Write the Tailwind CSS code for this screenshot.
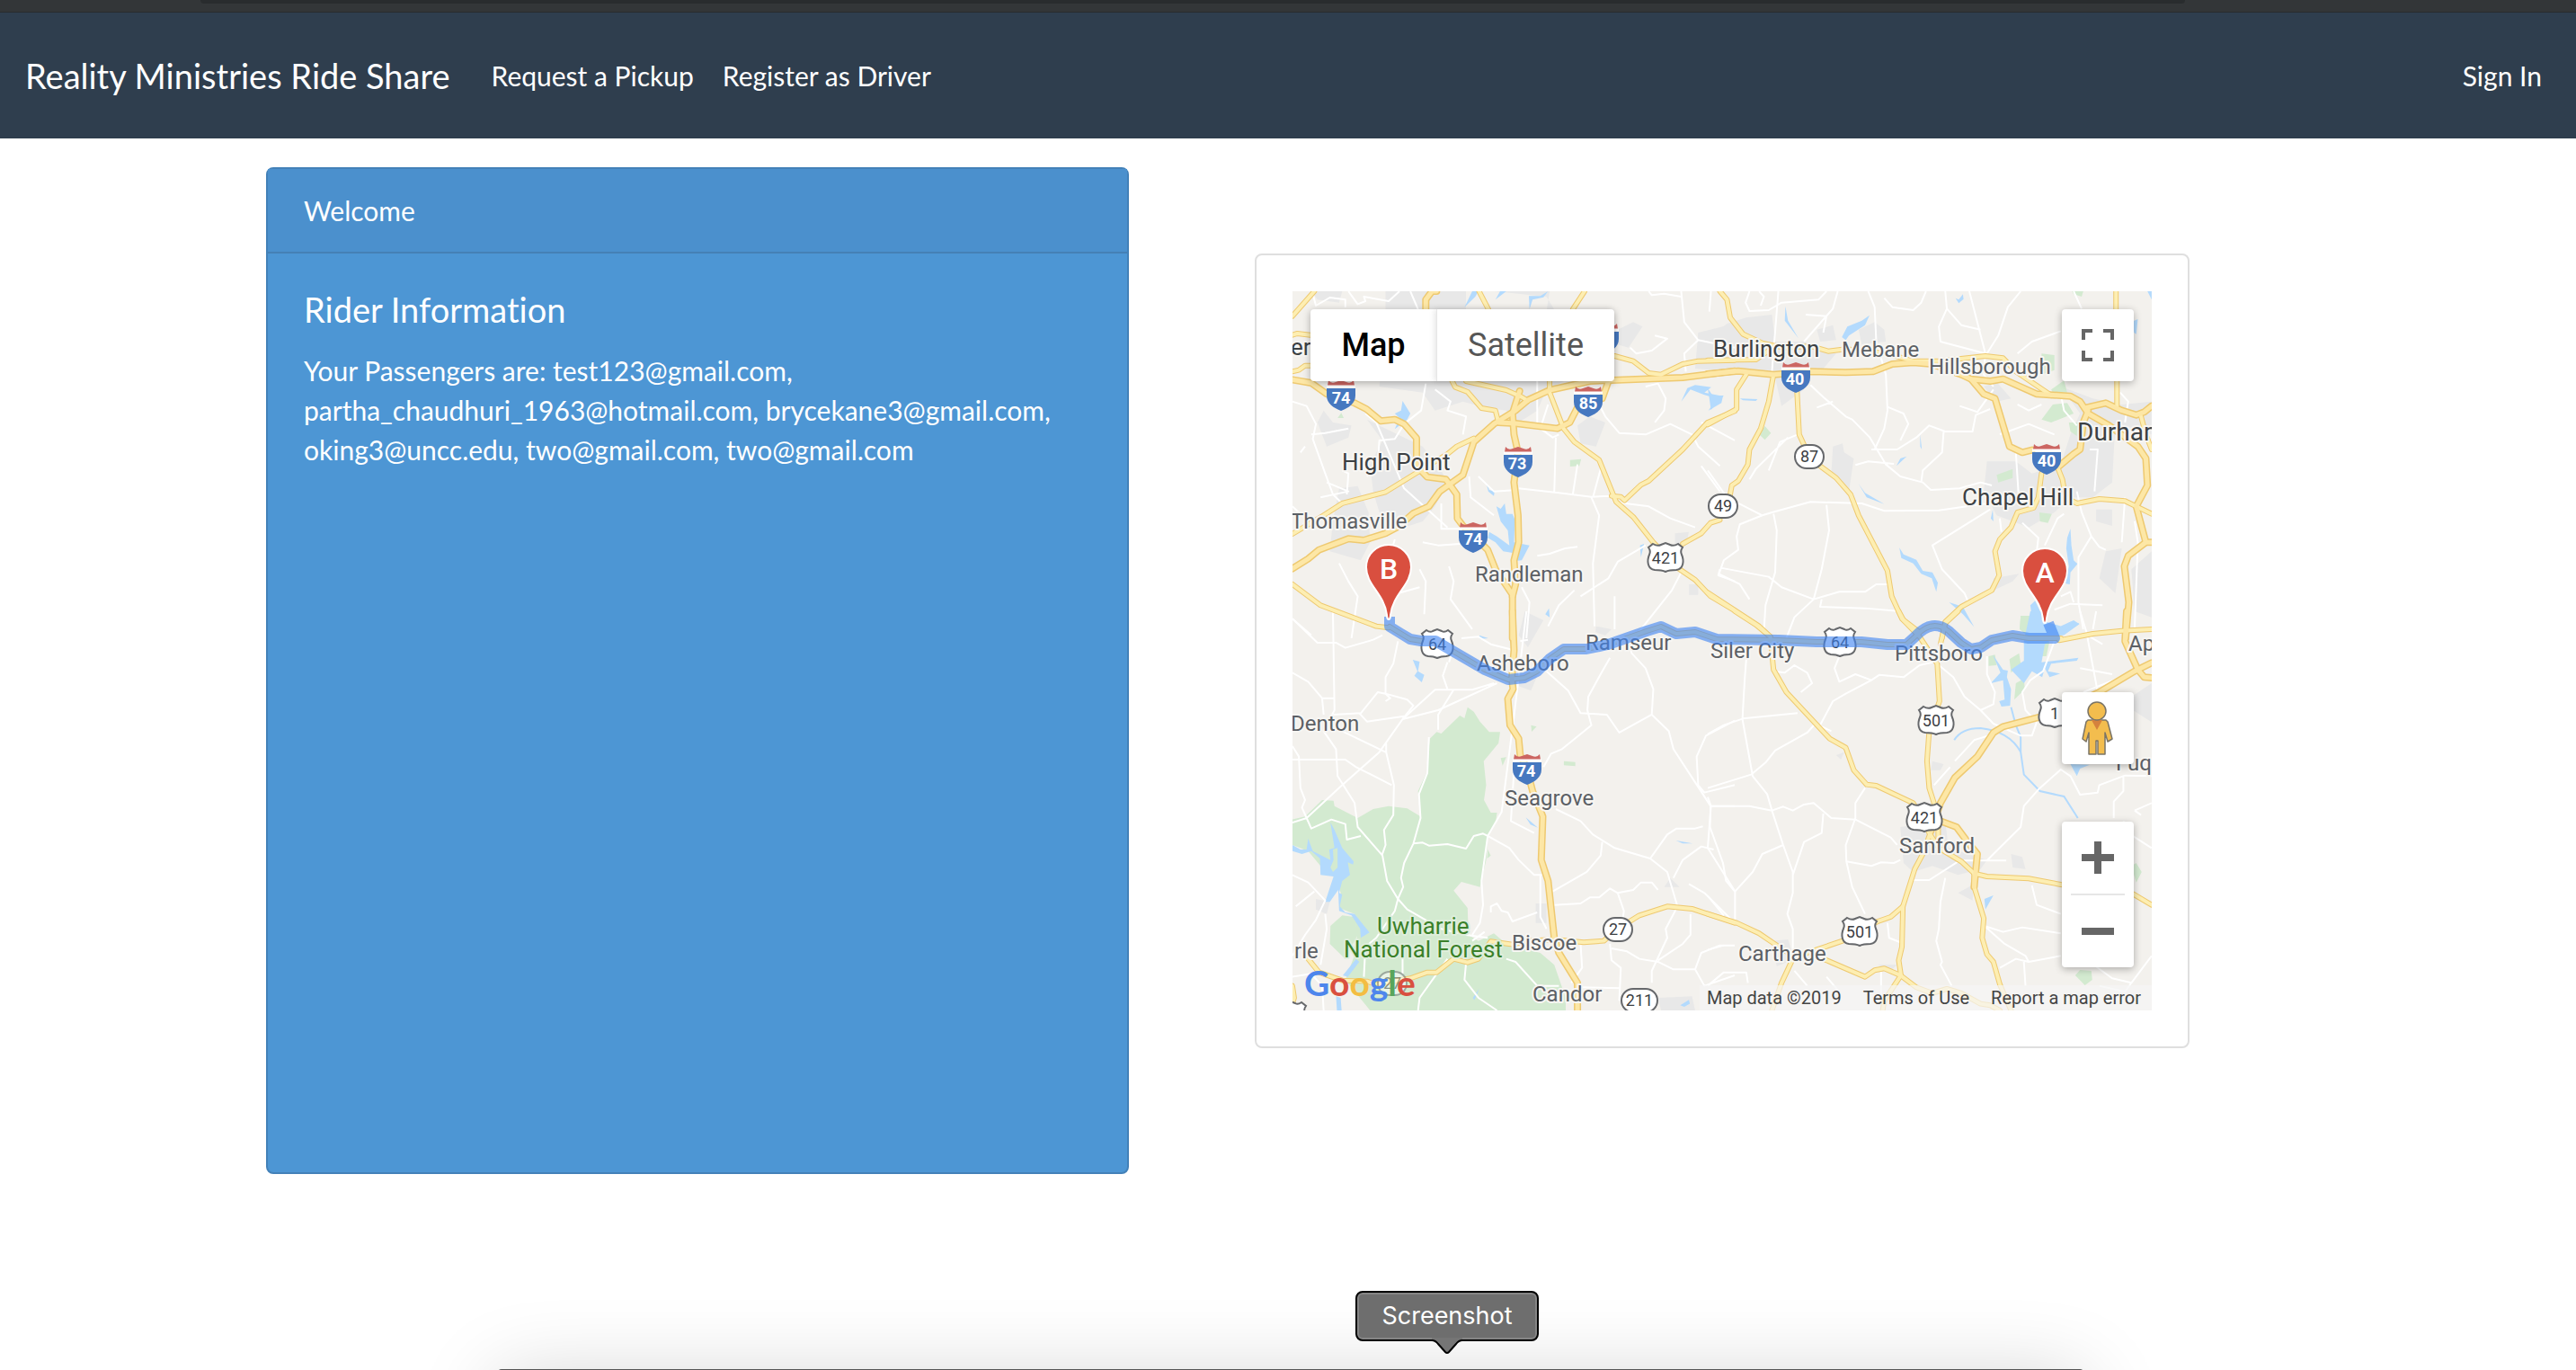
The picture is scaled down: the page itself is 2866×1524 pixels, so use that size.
<!doctype html>
<html lang="en">
<head>
    <meta charset="UTF-8" />
    <meta name="viewport" content="width=device-width, initial-scale=1.0" />
    <script src="https://cdn.jsdelivr.net/npm/@tailwindcss/browser@4"></script>
    <title>Reality Ministries Ride Share</title>
</head>
<body class="min-h-screen bg-white font-['Lato',sans-serif] text-[30px] leading-[44px] [font-variant-ligatures:none]">
    <!-- Browser toolbar edge -->
    <div class="flex h-[14px] justify-center border-b border-[#282b2e] bg-[#333638]">
        <div class="mr-[212px] h-1 w-[2208px] rounded-b-xl bg-[#292c2e]"></div>
    </div>

    <header class="bg-[#2f3e4e] text-white">
        <nav class="flex h-[140px] items-center pr-[38px] pl-7">
            <a href="#" class="mr-[46px] text-[38px]">Reality Ministries Ride Share</a>
            <div class="flex gap-8">
                <a href="#">Request a Pickup</a>
                <a href="#">Register as Driver</a>
            </div>
            <a href="#" class="ml-auto">Sign In</a>
        </nav>
    </header>

    <main class="mx-auto flex w-full max-w-[2274px] items-start gap-[140px] pt-8">
        <section class="min-h-[1120px] w-[960px] rounded-lg border-2 border-[#4381b8] bg-[#4d96d4] text-white">
            <div class="border-b-2 border-[#4580b5] bg-[#4b90cd] px-10 py-6">Welcome</div>
            <div class="p-10">
                <h4 class="mb-6 text-[38px]">Rider Information</h4>
                <p>Your Passengers are: test123@gmail.com, partha_chaudhuri_1963@hotmail.com, brycekane3@gmail.com, oking3@uncc.edu, two@gmail.com, two@gmail.com</p>
            </div>
        </section>

        <section class="mt-24 w-[1040px] rounded-lg border-2 border-[#dfdfdf] p-10">
            <div class="relative h-[800px] overflow-hidden bg-[#f3f1ed] font-['Roboto',sans-serif]">
                <svg class="block h-full w-full [&_path]:[vector-effect:non-scaling-stroke]" viewBox="0 0 956 800" preserveAspectRatio="xMinYMin slice" fill="none">
                    <defs>
                        <g id="interstate">
                            <path d="M-14 -17 Q-11 -13 -6 -15 L0 -17 L6 -15 Q11 -13 14 -17 L15 -11 H-15 Z" fill="#cc6662" />
                            <path d="M-16 -10 H16" stroke="#fff" stroke-width="3" />
                            <path d="M-16 -8 H16 V0 C16 9 8 14 0 17 C-8 14 -16 9 -16 0 Z" fill="#4678c0" />
                        </g>
                        <path id="us-two" d="M-12 -15 Q-8 -12 -5 -14 L0 -16 L5 -14 Q8 -12 12 -15 L17 -11 Q14 -7 16 -3 C19 4 18 13 10 14 Q4 14 0 16 Q-4 14 -10 14 C-18 13 -19 4 -16 -3 Q-14 -7 -17 -11 Z" fill="#fff" stroke="#66686b" stroke-width="2" />
                        <path id="us-three" d="M-14 -15 Q-9 -12 -5 -14 L0 -16 L5 -14 Q9 -12 14 -15 L19 -11 Q16 -7 18 -3 C21 4 20 13 12 14 Q4 14 0 16 Q-4 14 -12 14 C-20 13 -21 4 -18 -3 Q-16 -7 -19 -11 Z" fill="#fff" stroke="#66686b" stroke-width="2" />
                        <rect id="state-two" x="-16" y="-13" width="32" height="26" rx="13" fill="#fff" stroke="#66686b" stroke-width="2" />
                        <rect id="state-three" x="-20" y="-13" width="40" height="26" rx="13" fill="#fff" stroke="#66686b" stroke-width="2" />
                        <path id="pin" d="M0 0 C-1 0 -2 -2 -2 -5 C-5 -29 -25 -38 -25 -58 A25 25 0 0 1 25 -58 C25 -38 5 -29 2 -5 C2 -2 1 0 0 0 Z" fill="#d94f3f" stroke="#fff" stroke-width="2" />

                        <g id="highways">
                            <path d="M108 373 L121 381 L131 387 L143 389 H159 L214 421 L240 432 L258 430 L272 423 L286 409 L302 398 H327 L351 393 L394 378 L410 373 L427 381 L448 379 L472 387 L541 388 L583 390 H633 L662 393 L683 393 L694 383 Q712 364 730 378 L744 391 L755 398 L766 396 L778 388 L801 383 L819 386 H855" />
                            <g transform="translate(-48 -54) scale(.3444 .3333)">
                                <path d="M139 245 L210 162 M742 162 L772 222 M1083 162 L1045 222 M139 308 L155 303 L197 308 M139 430 L160 425 L180 410 L200 410" />
                                <path d="M139 972 L240 910 L300 870 L440 832 L545 765 L640 705 L670 680 L725 653" />
                                <path d="M655 462 L665 482 L705 498 L750 552 L795 560 L805 600 M700 462 L830 492 L880 515 L900 528" />
                                <path d="M970 462 V500 L1015 620 L1050 665 L1130 725 L1185 865 L1240 915 L1305 1000 L1390 1090 L1440 1125 L1490 1180 L1568 1228" />
                                <path d="M1170 845 L1200 848 L1212 860 L1265 808 L1290 795 L1400 690 L1480 600 L1568 562" />
                                <path d="M1180 378 L1240 395 L1290 435 L1330 440 L1400 405 L1450 395 L1568 392" />
                                <path d="M1400 1005 L1460 970 L1490 935 L1520 925 M139 1140 L230 1210 L410 1280 L450 1285" />
                            </g>
                            <g transform="translate(462 -54) scale(.3571 .3333)">
                                <path d="M38 162 L60 190 L70 250 L110 305 L170 335 L235 350 L320 345 L375 362 L430 355 L560 370 L640 395 L720 395 L865 378 L920 385 L960 430 L1050 495 L1070 510" />
                                <path d="M0 392 L150 390 L210 345 M1272 162 V222 M1275 462 V545 M1350 580 L1365 640 L1383 690" />
                                <path d="M1090 750 L1105 790 L1115 850 L1150 870 L1220 855 L1300 862 L1383 905" />
                                <path d="M1040 770 L1030 850 L1015 885 L965 900 L945 950 L910 990 L895 1030 L908 1110 L885 1160 L790 1215 L740 1265 L730 1320" />
                                <path d="M120 440 L90 490 V555 L0 607 M205 440 L190 530 L165 620 L130 690 L125 740 L95 795 L75 810 L70 840" />
                                <path d="M278 495 L285 640 L300 675 L350 745 L400 785 L445 840 L470 910 L560 1095 L573 1180 L605 1255 L660 1300" />
                                <path d="M0 1168 L160 1280 L195 1315" />
                            </g>
                            <g transform="translate(-48 356) scale(.3444 .3333)">
                                <path d="M190 1160 L225 1205 L300 1232 L380 1235 L410 1245 L520 1225 L575 1205 L605 1205 L660 1160 L705 1172 L740 1160 L780 1102 L850 1112 L900 1100 L985 1095 L1080 1105 L1145 1100 L1190 1060 L1260 1015 L1350 985 L1430 993 L1568 1040" />
                                <path d="M139 1250 L145 1290 L139 1310" />
                            </g>
                            <g transform="translate(462 356) scale(.3571 .3333)">
                                <path d="M0 1010 L90 1040 L160 1075 L215 1115 L265 1150 L310 1140 L420 1100 L470 1070 L530 1035 L570 1020 L608 985 L645 860 L670 810 L695 735" />
                                <path d="M265 1160 L230 1240 L200 1332 M360 1160 L490 1220 L520 1198 L550 1192 L600 1215 L650 1255 L700 1275 L745 1260 L790 1275 L850 1310 L880 1315 L910 1332" />
                                <path d="M608 985 L605 1120 L595 1165 L602 1215 L550 1300 L545 1332" />
                                <path d="M85 0 L150 45 L195 85 L205 195 L245 270 L380 425 L430 455 L455 530 L495 578 L525 582 L580 610 L640 640 L670 690 L690 740 L720 790 L790 835 L830 875 L870 885 L1000 892 L1100 912 L1320 940 L1383 980" />
                                <path d="M595 0 L610 30 L660 85 L700 150 L715 175 L722 300 L690 400 L683 500 L690 590 L705 640 L718 700 V760 M780 0 L740 40 L725 110" />
                                <path d="M830 875 L830 920 L860 1025 L855 1090 L870 1145 L890 1170 L910 1245 L945 1332 M1095 97 L1200 75 L1290 65 L1383 60" />
                            </g>
                        </g>
                        <g id="freeways">
                            <g transform="translate(-48 -54) scale(.3444 .3333)">
                                <path d="M570 222 V190 L590 162 H605" />
                                <path d="M139 457 L200 468 L250 505 L340 535 L378 555 L425 595 L470 590 L500 605 L540 652 V745 L575 782 L635 790 L670 840 L672 920 L690 945 L770 1025 L795 1090 L850 1175 V1320" />
                                <path d="M139 1088 L190 1055 L225 1025 L320 988 L370 993 L440 970 L480 948 L530 903 L580 880 L615 830 L690 775 L725 665 L790 605 L860 560 L900 525 L970 492 L1100 462 L1190 458 L1400 450 L1568 428" />
                                <path d="M873 495 L850 570 L855 640 L868 700 L855 800 L868 910 L870 1000 L855 1060 L860 1140 L850 1180" />
                                <path d="M805 600 L860 603 L995 620 L1035 600 L1070 530 L1140 520 L1160 462" />
                            </g>
                            <g transform="translate(462 -54) scale(.3571 .3333)">
                                <path d="M0 438 L95 428 L205 440 L320 430 L430 433 L515 430 L575 405 L640 400 L700 405 L750 425 L790 440 L820 455 L880 462 L920 455 L1025 505 L1130 512 L1160 530 L1185 570 L1250 610 L1340 680 L1365 720 L1370 810 L1335 880 L1365 1000" />
                                <path d="M820 455 L860 505 L895 520 L940 680 L980 700 L1010 692 M1180 550 L1240 535 L1290 560 L1335 575 L1360 565 L1383 545" />
                                <path d="M1185 560 L1170 600 L1160 690 L1140 705 L1090 750" />
                                <path d="M1383 1000 L1365 1000 L1310 1045 L1298 1080 L1312 1200 L1302 1320" />
                            </g>
                            <g transform="translate(-48 356) scale(.3444 .3333)">
                                <path d="M850 0 L855 130 L848 225 L852 260 L835 292 L842 380 L870 425 L875 480 L895 520 L915 600 L948 685 L943 830 L965 900 L985 1090 L1000 1140 L1060 1240 V1332" />
                            </g>
                            <g transform="translate(462 356) scale(.3571 .3333)">
                                <path d="M695 735 L725 640 L770 555 L840 485 L890 405 L920 385 L1080 340 L1220 270 L1330 200 L1383 172" />
                                <path d="M700 690 L775 720 L810 770 L840 810 L830 920 M1305 0 L1300 100 L1340 195 L1360 220 L1383 222" />
                            </g>
                        </g>
                    </defs>

                    <!-- Towns -->
                    <g fill="#e8e8e8">
                        <g transform="translate(-48 -54) scale(.3444 .3333)">
                            <path d="M440 162 L700 162 L700 230 L960 230 L970 162 L790 162 L960 180 L1000 250 L1060 440 L960 490 L930 560 L870 600 L830 560 L760 550 L690 530 L600 560 L560 500 L420 480 L440 300 Z" />
                            <path d="M380 590 L440 620 L560 680 L620 760 L640 800 L600 880 L560 930 L500 950 L420 900 L400 830 L390 740 L430 660 Z" />
                            <path d="M290 820 L350 812 L385 900 L390 1000 L360 1060 L260 1030 L270 930 Z M1060 610 L1100 580 L1150 600 L1120 680 L1070 670 Z M1190 290 L1240 265 L1270 280 L1225 350 L1190 340 Z M1450 300 L1568 270 V430 L1440 420 Z M1375 970 L1420 965 L1410 1010 L1375 1020 Z M1420 1140 H1450 V1175 H1420 Z M220 600 L240 560 L270 600 L330 610 L320 650 L250 680 Z M200 162 H300 L290 200 L220 190 Z" />
                        </g>
                        <g transform="translate(462 -54) scale(.3571 .3333)">
                            <path d="M0 320 L60 270 L120 250 L200 240 L210 330 L300 330 L340 350 L400 370 L360 420 L270 440 L300 490 L230 545 L210 450 L100 420 L0 410 Z" />
                            <path d="M340 290 L390 275 L400 325 L350 330 Z M470 290 L520 265 L550 290 L555 330 L480 340 Z M390 680 L420 670 L425 700 L455 720 L440 830 L385 770 Z M860 480 L900 465 L945 520 L900 530 Z" />
                            <path d="M1100 480 L1200 520 L1290 540 L1383 530 V640 L1270 600 L1260 800 L1200 850 L1130 850 L1080 900 L1000 950 L900 910 L860 830 L870 730 L960 730 L1010 770 L1100 740 L1130 640 L1160 570 Z" />
                            <path d="M1210 890 L1260 890 V945 L1210 930 Z M1240 1030 L1290 1020 L1270 1170 L1220 1120 Z M1320 1090 L1383 1030 V1250 L1330 1230 Z M890 1120 L970 1105 L950 1130 L890 1160 Z" />
                        </g>
                        <g transform="translate(-48 356) scale(.3444 .3333)">
                            <path d="M890 0 L950 30 L900 120 L870 80 Z M860 200 L930 215 L910 265 L870 250 Z M925 975 H960 V1040 H925 Z M215 960 L260 970 L250 1010 L215 995 Z M1340 920 L1360 890 L1390 920 Z M1320 1290 L1430 1285 L1440 1332 H1330 Z M1120 50 L1170 60 L1150 80 L1118 70 Z" />
                        </g>
                        <g transform="translate(462 356) scale(.3571 .3333)">
                            <path d="M600 720 L740 700 L750 790 L870 830 L850 860 L780 880 L700 850 L640 870 L610 840 Z M700 500 L735 510 L725 530 L695 530 Z M945 810 L980 820 L990 860 L950 855 Z M780 940 L830 910 L825 965 Z M200 1100 L250 1095 L270 1160 L215 1185 Z M530 1180 L590 1180 L570 1200 Z M1300 300 L1383 240 V370 L1310 320 Z M400 480 L425 470 L415 495 Z" />
                        </g>
                    </g>

                    <!-- Parks -->
                    <g fill="#d3ead0">
                        <g transform="translate(-48 356) scale(.3444 .3333)">
                            <path d="M583 425 L605 403 L620 408 L680 348 L695 357 L705 320 L725 335 L745 368 L775 403 L810 403 L805 440 L757 500 L765 580 L758 630 L780 672 L800 672 L795 710 L770 750 L765 830 L745 920 L685 903 L660 932 L705 990 L708 1080 L740 1100 L790 1075 L830 1110 L940 1140 L985 1180 L1022 1290 V1332 H390 L310 1230 L350 1120 L340 1010 L290 990 L295 940 L280 880 L230 850 L190 800 L139 780 V695 L180 685 L235 630 L272 632 L275 650 L350 690 L400 660 L450 650 L510 658 L553 685 L545 600 L572 540 Z" />
                            <path d="M262 1050 L300 1015 L340 1020 L350 1080 L310 1160 L260 1110 Z M910 380 L928 385 L912 402 Z M812 490 L830 487 L818 515 Z M1016 500 L1053 503 V517 L1016 514 Z M770 795 L780 815 L768 825 Z" />
                        </g>
                        <g transform="translate(462 -54) scale(.3571 .3333)">
                            <path d="M160 640 L178 612 L197 635 L178 658 Z M1135 162 L1170 162 L1165 180 L1140 172 Z M1040 370 L1080 375 L1080 425 L1040 440 Z M1070 490 L1110 460 L1120 500 L1075 500 Z M1040 590 L1075 540 L1120 535 L1140 570 L1070 600 Z M1125 600 L1155 600 L1150 645 L1130 630 Z M900 775 L950 755 L950 785 L905 800 Z M1033 900 L1072 905 L1060 935 L1035 930 Z M975 1245 L1005 1245 L1000 1315 L972 1290 Z" />
                        </g>
                        <g transform="translate(-48 -54) scale(.3444 .3333)">
                            <path d="M1036 725 L1072 722 L1066 745 L1036 747 Z M285 585 L297 568 L305 585 Z" />
                        </g>
                        <g transform="translate(462 356) scale(.3571 .3333)">
                            <path d="M975 15 H1000 V80 L972 60 Z M875 150 L895 145 L900 180 L875 182 Z M940 160 L970 140 L975 175 L945 205 Z M960 240 L985 225 L988 260 L955 295 Z M1045 100 L1065 100 L1055 150 L1040 150 Z M1320 850 L1335 840 L1352 870 L1335 905 Z M1145 1215 L1160 1197 L1195 1200 L1198 1230 L1175 1248 Z" />
                        </g>
                    </g>

                    <!-- Lakes and rivers -->
                    <g fill="#b3dafd">
                        <g transform="translate(-48 -54) scale(.3444 .3333)">
                            <path d="M695 215 L720 162 H740 L730 180 Z M795 190 L810 162 H830 Z M905 222 L903 178 L940 178 L965 162 L950 182 L915 190 Z M470 570 L490 560 L495 528 L520 570 L510 590 L470 622 L485 585 Z M765 800 L775 825 L792 830 L790 845 L772 830 Z" />
                            <path d="M798 880 L812 888 L825 870 L830 905 L850 905 L858 925 L855 1000 L905 1010 L890 1040 L880 1060 L860 1062 L850 1035 L820 1030 L795 1000 L770 985 L775 965 L800 980 L840 1010 L835 960 L812 930 Z" />
                            <path d="M1395 530 L1415 485 L1440 475 L1492 482 L1470 500 L1530 512 L1525 535 L1483 560 L1510 520 L1470 508 L1425 490 Z M956 1240 L968 1220 L970 1250 Z M1262 1010 L1275 1005 L1265 1050 Z" />
                        </g>
                        <g transform="translate(462 -54) scale(.3571 .3333)">
                            <path d="M418 315 L435 280 L480 260 L504 242 L490 275 L440 310 L430 325 Z M242 212 L250 260 L282 318 L240 260 Z M772 185 L782 190 L795 172 L797 188 L782 202 Z M0 485 L15 510 L50 510 L10 558 L5 520 Z M100 520 L155 522 L150 528 L110 526 Z M662 640 L667 690 L662 680 Z M588 745 L600 720 L620 713 Z M470 805 L490 835 L550 872 L495 850 Z M1370 162 H1383 V190 Z M1325 262 L1340 255 L1335 305 L1328 300 Z" />
                            <path d="M597 1018 L610 1040 L650 1058 L670 1095 L700 1100 L717 1135 L712 1165 L698 1120 L665 1105 L640 1070 L603 1052 Z M1120 985 L1130 955 L1133 1010 L1140 1060 L1152 1072 L1130 1100 L1128 1140 L1115 1138 L1125 1080 L1117 1020 Z M882 920 L888 890 L890 930 Z M752 1200 L795 1215 L830 1283 L795 1240 Z" />
                            <path d="M1005 1210 L1020 1195 L1040 1240 L1040 1260 L1100 1280 L1140 1260 L1158 1273 L1110 1310 L995 1320 L1010 1250 Z" />
                        </g>
                        <g transform="translate(-48 356) scale(.3444 .3333)">
                            <path d="M139 780 L165 795 L185 795 L190 758 L205 800 L262 830 L258 795 L275 790 L262 705 L275 730 L300 790 L337 835 L335 845 L318 838 L325 880 L300 900 L290 940 L300 945 L292 985 L310 1005 L340 1010 L388 1072 L360 1090 L358 1060 L330 1015 L290 1000 L287 930 L260 970 L245 970 L272 885 L230 880 L228 825 L200 800 L170 810 L139 800 Z M528 162 L550 168 L545 200 L565 212 L557 237 L533 215 L543 200 Z M743 80 L772 90 L745 92 Z M893 688 L932 722 L908 712 Z M1378 765 L1432 775 L1400 775 Z M345 1160 L355 1170 L318 1220 L302 1215 Z M280 1285 L295 1290 L298 1332 H283 Z M722 1290 L742 1260 L735 1280 L727 1298 Z M1392 1315 L1420 1297 L1423 1310 L1405 1320 Z" />
                            <path d="M270 795 L285 790 L285 855 L270 870 L262 855 L272 830 Z" fill="#d3ead0" />
                        </g>
                        <g transform="translate(462 356) scale(.3571 .3333)">
                            <path d="M1005 0 H1040 L1040 50 L1090 60 L1130 35 L1158 40 L1100 70 L1050 110 L1040 170 L1155 155 L1150 165 L1070 175 L1060 200 L1098 208 L1065 220 L1050 190 L1042 220 L1010 200 L985 240 L945 195 L985 165 L985 100 Z M888 145 L920 195 L935 198 L932 220 L945 260 L942 315 L915 318 L908 300 L925 295 L920 230 L882 240 L912 205 Z" />
                            <path d="M1130 510 L1190 512 L1160 525 L1150 550 Z M862 960 L890 948 L865 995 Z" />
                            <path d="M768 430 Q790 390 850 390 Q940 400 975 470 L985 545 L1035 600 L1110 618 L1153 690 M945 320 L960 380 L975 420 V470" fill="none" stroke="#b3dafd" stroke-width="2" />
                        </g>
                    </g>

                    <!-- Local roads -->
                    <g stroke="#fff" stroke-width="2" stroke-linejoin="round">
                        <g transform="translate(-48 -54) scale(.3444 .3333)">
                            <path d="M205 170 L215 210 L260 183 L310 190 L310 215 M320 162 L350 205 L375 195 L370 180 L450 195 L485 162 M520 162 L545 222 M139 530 L185 545 L215 605 L205 655 L245 770 L270 840 L300 870 M139 880 L180 920 L175 940 M375 570 L410 600 L500 820 L640 950 M570 470 L555 560 L500 605 L470 655 L420 660 L415 730 L380 780" />
                            <path d="M600 490 L650 530 L640 560 L700 580 L690 640 M930 462 V600 M965 540 L940 620 L980 650 L1000 640 M870 820 L1000 835 L1105 848 L1170 845 M990 650 L985 835 M1060 740 L1045 840 M1105 850 L1130 910 L1110 1070 L1115 1280 M1110 850 L1140 735 M930 1045 L970 1038 L1020 1020 L1060 1015 M1395 1100 L1365 1160 L1250 1310 M1050 1160 L1000 1210 L965 1280" />
                            <path d="M1130 540 L1150 580 L1195 635 L1280 640 L1360 605 L1430 640 L1450 680 L1520 745 M1280 480 L1320 470 L1345 520 L1340 560 L1310 600 M1395 162 L1405 265 L1450 325 L1568 350 M1450 325 L1405 370 L1410 430 M1310 310 L1350 320 L1300 360 L1250 370 L1230 350 M1460 745 L1520 830 M1175 865 L1290 880 L1360 920 L1440 950 M1280 1010 L1190 1065 L1160 1120 L1070 1180 M1460 600 L1568 660 M1290 162 L1300 175 L1340 170 L1395 180" />
                            <path d="M139 1255 L200 1310 M290 1070 L320 1130 L350 1180 L330 1320 M470 990 L450 1060 M560 1000 L610 1010 L680 1005 M550 1090 L570 1130 L565 1240 M645 1080 L660 1130 L650 1190 L720 1290 M480 1170 L550 1150 M880 1150 L905 1200 L895 1320 M620 870 V955 L680 955 M710 780 L715 850 L790 910 M740 780 L790 830 L865 825 M200 640 L245 635 L320 620 M180 680 L165 700 M300 760 L320 770 L315 840 M250 800 L320 830 L230 850" />
                            <path d="M1180 1180 V1290 M1520 1090 L1515 1110 L1568 1130" />
                        </g>
                        <g transform="translate(462 -54) scale(.3571 .3333)">
                            <path d="M10 162 L5 230 M130 162 L118 200 L130 228 L190 225 L230 200 L345 190 L370 162 M160 162 L175 180 L165 210 M220 162 L200 430 M405 162 L390 220 L300 330 M305 240 L370 245 L360 300 M500 162 L520 215 L525 330 L555 440 L560 560 L550 620 L520 690 M550 185 L575 215 L640 225 L665 200 L680 162 M740 162 L745 220 L720 280 L725 330 L865 370 M745 220 L790 275 L850 290 M815 162 L865 370 L860 440 L890 480 M975 162 L935 215 L905 310 L865 378 M1140 162 L1165 220 M965 370 L1010 330 L1100 295" />
                            <path d="M320 475 L360 515 L430 580 L450 590 L505 650 L555 740 L600 780 L670 800 L695 825 L785 820 L850 800 L885 810 M460 742 L500 730 L580 738 M510 690 L590 690 L650 650 L690 610 L740 630 L825 630 L835 575 L880 555 M560 548 L610 570 L625 605 L600 660 M785 545 L840 565 L890 490 M735 630 L730 700 L670 760 L665 800 M910 640 L1000 605 L1080 640 M965 540 L1000 560 L1040 540 M390 530 L340 550" />
                            <path d="M0 760 L60 850 L170 910 L200 900 L320 865 L480 870 L550 895 L720 893 L870 870 M370 875 L378 960 L355 1090 L330 1190 L270 1250 L245 1320 M205 905 L215 960 L210 1100 L180 1210 L175 1300 M170 910 L100 940 L90 980 L95 1025 L50 1060 L35 1105 L100 1140 L130 1190 M40 1085 L190 1115 L230 1150 L330 1190 L410 1165 L490 1165 L525 1140 L560 1140 M355 1190 L350 1215 L490 1220 L600 1230 M250 650 L150 755 L130 790 M280 640 L225 665 L190 760" />
                            <path d="M880 890 L700 1010 L730 1090 L800 1170 L810 1195 M910 920 L915 965 M980 935 L1030 985 L1025 1030 M1050 1010 L1090 920 L1110 905 M960 700 L970 870 M1150 830 L1165 900 L1195 980 L1155 1050 V1200 L1170 1290 M1195 980 L1220 1015 L1240 1025 M1080 1225 L1130 1205 L1230 1210 M1100 1180 L1130 1165 L1140 1200 M1300 850 L1290 1000 M1285 500 L1310 530 L1300 600 M1330 930 L1340 1000 L1330 1290 M1190 690 L1215 690 L1205 830 M1100 505 L1110 560 L1150 610" />
                        </g>
                        <g transform="translate(-48 356) scale(.3444 .3333)">
                            <path d="M139 25 L220 105 L280 105 L310 122 L400 95 L430 80 M270 0 L275 330 L240 400 L280 460 L285 550 L340 640 L350 720 L430 815 L445 900 L480 960 L510 995 L620 1060 L700 1080 L770 1090 M139 205 L190 235 L235 290 H275 M235 290 L240 345 M270 345 L360 340 L415 270 L440 275 L510 295 L530 315 L495 360 M480 100 L465 175 L440 220 V275 M440 275 L455 290 L440 300" />
                            <path d="M185 690 L300 580 L420 470 L495 360 L610 330 L800 240 M355 340 L380 368 L500 350 M495 360 L600 262 L720 262 L790 240 M300 400 L440 470 M442 440 V470 L467 580 L465 680 L435 730 L440 780 L428 815 M139 495 L310 495 L345 520 L460 580 M139 450 L160 485 L165 590 L180 630 L170 655 L185 690 L200 725 L265 695 L310 710 L315 762 L360 750 M139 705 L185 690 M610 395 V345 L660 262 M580 420 L575 540 L548 610 L553 690 L530 775 L500 840 L490 890 L497 920 L480 960 L470 1000 L410 1090 L375 1120 L370 1220" />
                            <path d="M530 775 L560 772 L580 782 L640 777 L700 792 L725 750 L755 742 L770 750 L840 790 L870 830 L920 880 H945 M770 750 L815 670 L855 350 M770 750 L750 900 L755 980 L745 1040 L720 1080 M855 530 L845 700 L920 740 M685 90 L740 85 L780 110 L855 130 M640 170 L625 215 L640 260 M660 120 L645 170 M895 0 L870 220 L855 350 M875 100 L900 95" />
                            <path d="M960 200 L1030 265 L1070 340 L1155 345 L1195 405 L1300 345 L1305 260 L1280 190 L1235 140 L1230 120 M1300 345 L1355 400 L1370 460 L1490 650 L1488 720 L1530 840 L1540 900 L1568 935 M1165 155 L1140 200 L1095 285 L1092 330 L1105 380 L1010 460 L975 475 L950 520 M1568 365 L1475 415 L1445 485 L1450 580 L1470 605 L1568 580 M1490 650 H1568 M990 660 L1070 700 L1110 745 L1180 790 L1295 825 L1350 870 L1383 985 L1345 1060 L1350 1090 L1300 1200 V1240 M1140 770 L1135 815 L1090 870 L980 935" />
                            <path d="M1295 825 L1350 745 L1380 725 L1440 725 L1465 718 M1370 890 L1400 830 L1460 785 L1500 795 M1420 910 L1470 940 L1568 1040 M985 980 L1070 975 L1100 955 L1130 955 L1165 925 L1190 940 L1240 930 L1265 905 L1300 905 L1320 930 M1190 940 L1210 1000 L1205 1040 M780 1005 L780 985 L800 975 L815 1000 L835 1005 L850 1035 L930 1005 M940 880 V1020 L960 1060 M1070 1110 L1075 1190 L1040 1240 M1165 1110 L1170 1165 L1200 1190 L1195 1300 M1170 1125 L1220 1135 L1260 1160 L1320 1170 L1370 1195 L1440 1195 L1460 1140 L1520 1115 H1568 M1320 1165 L1400 1110 L1425 1080 V1010 M1440 1195 L1470 1250 L1568 1215 M1070 1255 L1200 1258" />
                            <path d="M139 880 L190 905 L245 965 L215 1030 L180 1080 L139 1150 M210 935 L150 985 M245 1010 L250 1060 L230 1180 M139 1220 L200 1210 L235 1250 L240 1332 M640 1160 L550 1290 L545 1332 M700 1175 L695 1230 L740 1290 L800 1332 M830 1160 L860 1170 L930 1250 L1000 1250 M495 1160 V1210 M720 1100 L760 1070" />
                        </g>
                        <g transform="translate(462 356) scale(.3571 .3333)">
                            <path d="M0 410 L50 380 L110 358 L280 340 M120 160 L115 230 L108 360 L140 550 L185 610 L200 665 L235 780 L265 870 V940 L248 1010 L265 1060 V1150 M385 400 L335 375 L310 405 L210 465 L180 505 L135 545 L0 590 M0 620 L10 650 L130 650 L200 665 L235 652 L265 665 L300 645 L330 640 L385 690 L460 695 L570 755 L590 780 M10 650 L0 790 L85 935 V1040 M235 780 L170 810 L140 870 L85 935 M360 675 L355 740 L300 770 L265 880 M490 590 L460 640 V690 L430 780 L432 835 L450 920 L490 1010" />
                            <path d="M432 835 L510 850 L540 838 L580 840 L600 830 M205 200 L240 205 L270 180 L310 205 L325 240 L290 270 M410 150 L395 190 L410 235 L460 210 L510 230 L535 212 L610 220 L660 180 L700 170 M510 230 L430 275 L390 300 L350 380 M720 180 L765 220 L800 285 L850 330 L890 375 L975 415 H1010 L1025 370 M850 330 L890 310 L895 270 L870 210 V150 M770 500 L830 430 L890 410 M705 580 L755 520 M1025 370 L990 330 L980 270 L1005 230 L1045 200 L1080 100" />
                            <path d="M1383 550 L1300 548 L1220 580 L1215 605 L1160 612 L1130 550 L1100 528 L1030 595 L985 650 L975 720 L890 810 L870 832 H790 M870 832 H930 M640 897 H690 L780 835 M1295 550 V600 L1265 635 V690 M1330 665 L1383 640 M1330 665 L1350 680 M1295 700 L1310 740 L1383 790 M740 890 L725 970 L720 1060 L712 1100 L730 1170 L725 1180 L760 1250 M862 1050 L920 1070 L980 1055 L1100 1075 M862 1050 L925 1110 L990 1150 L1000 1170 L1100 1150 M1000 1170 L960 1160 L910 1190 M985 1170 L990 1250" />
                            <path d="M1010 915 L1025 980 L1100 1010 M1190 1170 L1260 1225 L1320 1240 L1383 1150 M1320 1240 L1300 1270 L1220 1250 M0 950 L50 1015 M0 1130 L50 1115 M0 1250 L50 1205 L120 1205 L125 1240 M270 1200 L310 1250 M370 1220 L410 1270 M540 1200 V1290 M560 1040 L565 1090 L600 1105 M1160 0 L1180 70 L1215 270 M1170 270 L1300 215 M1160 190 L1260 210 M1175 75 L1230 110 M1210 0 L1200 60" />
                        </g>
                    </g>

                    <g stroke-linejoin="round" stroke-linecap="round">
                        <use href="#highways" stroke="#eec970" stroke-width="6" />
                        <use href="#freeways" stroke="#eec970" stroke-width="8" />
                        <use href="#highways" stroke="#fdeeb2" stroke-width="4" />
                        <use href="#freeways" stroke="#fde7a6" stroke-width="5" />
                    </g>

                    <!-- Road shields -->
                    <g font-size="18" text-anchor="middle" fill="#3c4043">
                        <g fill="#fff" font-weight="700">
                            <use href="#interstate" x="54" y="116" /><text x="54" y="125">74</text>
                            <use href="#interstate" x="329" y="123" /><text x="329" y="131">85</text>
                            <use href="#interstate" x="347" y="53" />
                            <use href="#interstate" x="251" y="190" /><text x="250" y="198">73</text>
                            <use href="#interstate" x="201" y="274" /><text x="201" y="282">74</text>
                            <use href="#interstate" x="560" y="96" /><text x="559" y="104">40</text>
                            <use href="#interstate" x="839" y="187" /><text x="839" y="195">40</text>
                            <use href="#interstate" x="261" y="532" /><text x="260" y="540">74</text>
                        </g>
                        <use href="#us-three" x="415" y="296" /><text x="415" y="303">421</text>
                        <use href="#us-two" x="161" y="392" /><text x="161" y="399">64</text>
                        <use href="#us-two" x="609" y="390" /><text x="609" y="397">64</text>
                        <use href="#us-three" x="716" y="477" /><text x="716" y="484">501</text>
                        <use href="#us-two" x="848" y="469" /><text x="848" y="476">1</text>
                        <use href="#us-three" x="703" y="585" /><text x="703" y="592">421</text>
                        <use href="#us-three" x="631" y="712" /><text x="631" y="719">501</text>
                        <use href="#us-two" x="-2" y="806" />
                        <use href="#state-two" x="479" y="239" /><text x="479" y="245">49</text>
                        <use href="#state-two" x="575" y="184" /><text x="575" y="190">87</text>
                        <use href="#state-two" x="362" y="710" /><text x="362" y="716">27</text>
                        <use href="#state-three" x="386" y="789" /><text x="386" y="795">211</text>
                        <g opacity=".5"><use href="#state-two" x="111" y="770" /><text x="111" y="776">27</text></g>
                    </g>

                    <!-- Place names -->
                    <g font-size="24" fill="#5c6065" stroke="#f7f6f3" stroke-width="4" stroke-linejoin="round" paint-order="stroke">
                        <text x="-2" y="264">Thomasville</text>
                        <text x="203" y="323">Randleman</text>
                        <text x="611" y="73">Mebane</text>
                        <text x="708" y="92">Hillsborough</text>
                        <text x="326" y="399">Ramseur</text>
                        <text x="205" y="422">Asheboro</text>
                        <text x="-2" y="489">Denton</text>
                        <text x="236" y="572">Seagrove</text>
                        <text x="244" y="733">Biscoe</text>
                        <text x="267" y="790">Candor</text>
                        <text x="2" y="742">rle</text>
                        <text x="465" y="408">Siler City</text>
                        <text x="670" y="411">Pittsboro</text>
                        <text x="930" y="400">Apex</text>
                        <text x="916" y="533">Fuquay</text>
                        <text x="675" y="625">Sanford</text>
                        <text x="496" y="745">Carthage</text>
                        <g fill="#3c4043" font-size="26">
                            <text x="-2" y="71">er</text>
                            <text x="468" y="73">Burlington</text>
                            <text x="55" y="199">High Point</text>
                            <text x="745" y="238">Chapel Hill</text>
                            <text x="873" y="166" font-size="28">Durham</text>
                        </g>
                        <g fill="#3a8029" stroke="#deeedb" font-size="26">
                            <text x="94" y="715">Uwharrie</text>
                            <text x="57" y="741">National Forest</text>
                        </g>
                    </g>

                    <!-- Route -->
                    <path d="M108 362 V373 L121 381 L131 387 L143 389 H159 L214 421 L240 432 L258 430 L272 423 L286 409 L302 398 H327 L351 393 L394 378 L410 373 L427 381 L448 379 L472 387 L541 388 L583 390 H633 L662 393 L683 393 L694 383 Q712 364 730 378 L744 391 L755 398 L766 396 L778 388 L801 383 L819 386 H848 L841 369" stroke="#3f85f2" stroke-opacity=".62" stroke-width="12" stroke-linejoin="round" />
                    <use href="#pin" x="107" y="365" />
                    <use href="#pin" x="837" y="369" />
                    <g font-size="32" font-weight="500" fill="#fff" text-anchor="middle">
                        <text x="107" y="320">B</text>
                        <text x="837" y="324">A</text>
                    </g>
                    <text x="13" y="784" font-family="Lato" font-size="39" font-weight="700" fill="#4e86ec">G<tspan fill="#d94f3f">o</tspan><tspan fill="#f3bd42">o</tspan>g<tspan fill="#58a55c">l</tspan><tspan fill="#d94f3f">e</tspan></text>
                </svg>

                <!-- Map controls -->
                <div class="absolute top-5 left-5 flex h-20 rounded-sm bg-white text-[36px] shadow-[0_2px_8px_rgba(0,0,0,0.3)]">
                    <button class="w-[140px] rounded-l-sm font-medium text-black">Map</button>
                    <button class="w-[198px] rounded-r-sm border-l border-[#e6e6e6] text-[#565656] shadow-[-2px_0_6px_rgba(0,0,0,0.1)]">Satellite</button>
                </div>
                <button class="absolute top-5 right-5 flex size-20 items-center justify-center rounded-sm bg-white shadow-[0_2px_8px_rgba(0,0,0,0.3)]" aria-label="Toggle fullscreen view">
                    <svg class="size-9" viewBox="0 0 36 36" fill="none" stroke="#666" stroke-width="4">
                        <path d="M2 12 V2 H12 M24 2 H34 V12 M34 24 V34 H24 M12 34 H2 V24" />
                    </svg>
                </button>
                <div class="absolute right-5 bottom-12 flex flex-col gap-16">
                    <button class="size-20 rounded-sm bg-white shadow-[0_2px_8px_rgba(0,0,0,0.3)]" aria-label="Street View">
                        <svg class="size-20" viewBox="0 0 80 80" fill="#f3bd4e" stroke="#7a7466" stroke-width="1.5" stroke-linejoin="round">
                            <path d="M29 31 H49 L51 33 L56 52 L51 55 L48 45 V69 H40 V54 H38 V69 H30 V45 L27 55 L23 52 L27 33 Z" />
                            <path d="M33 31 H45 L39 42 Z" fill="#d5813d" stroke="none" />
                            <circle cx="39" cy="21" r="10" />
                        </svg>
                    </button>
                    <div class="flex flex-col items-center rounded-sm bg-white shadow-[0_2px_8px_rgba(0,0,0,0.3)]">
                        <button class="flex size-20 items-center justify-center" aria-label="Zoom in">
                            <svg class="size-9" viewBox="0 0 36 36" stroke="#666" stroke-width="8"><path d="M18 0 V36 M0 18 H36" /></svg>
                        </button>
                        <div class="h-[2px] w-[60px] bg-[#e6e6e6]"></div>
                        <button class="flex size-20 items-center justify-center" aria-label="Zoom out">
                            <svg class="size-9" viewBox="0 0 36 36" stroke="#666" stroke-width="8"><path d="M0 18 H36" /></svg>
                        </button>
                    </div>
                </div>
                <div class="absolute right-0 bottom-0 flex h-7 items-center gap-6 bg-[#f5f5f5]/70 pr-3 pl-2 text-[20px] text-[#444]">
                    <span>Map data ©2019</span>
                    <a href="#">Terms of Use</a>
                    <a href="#">Report a map error</a>
                </div>
            </div>
        </section>
    </main>

    <!-- Dock edge and its tooltip -->
    <div class="fixed right-[548px] -bottom-[199px] left-[554px] h-[200px] rounded-sm border-t-2 border-[#555] bg-[#ddd] shadow-[0_10px_90px_rgba(0,0,0,0.18)]"></div>
    <div class="fixed bottom-8 left-[1508px] flex h-14 w-[204px] items-center justify-center rounded-lg border-2 border-black bg-[#6e6e6e] font-['Inter',sans-serif] text-[27px] text-white inset-ring-2 inset-ring-[#858585]">
        Screenshot
        <svg class="absolute top-[50px] left-[82px] h-[18px] w-9" viewBox="0 0 36 18"><path d="M1 2 Q5 3 8 7 L16 16 Q18 18 20 16 L28 7 Q31 3 35 2 V0 H1 Z" fill="#757575" /><path d="M1 3 Q5 3 8 7 L16 16 Q18 18 20 16 L28 7 Q31 3 35 3" fill="none" stroke="#000" stroke-width="2" /></svg>
    </div>
</body>
</html>
